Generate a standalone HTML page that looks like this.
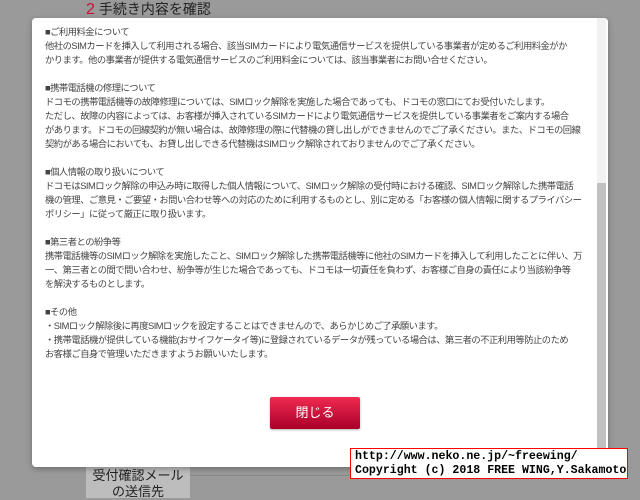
<!DOCTYPE html>
<html><head><meta charset="utf-8"><style>
body{margin:0;width:640px;height:486px;background:#9a9a9a;position:relative;overflow:hidden;font-family:"Liberation Sans","Noto Sans CJK JP",sans-serif;}
.hd{position:absolute;left:86px;top:-1px;font-size:14px;color:#222;line-height:20px}
.hd b{color:#c8103a;font-weight:normal;font-size:16px;margin-right:4px}
.line{position:absolute;left:86px;right:87px;top:18px;height:2px;background:#8a1a30}
.tab{position:absolute;left:86px;top:465px;width:104px;height:30px;background:#bdbdbd;font-size:13px;color:#222;text-align:center;line-height:16px;padding-top:3px;white-space:nowrap}
.rule{position:absolute;left:190px;right:32px;top:475px;height:1px;background:#888}
.modal{position:absolute;left:32px;top:18px;width:576px;height:449px;background:#fff;border-radius:4px;overflow:hidden;box-shadow:0 2px 6px rgba(0,0,0,.3)}
.txt{position:absolute;left:13px;top:7px;font-size:9.3px;letter-spacing:-0.5px;line-height:14px;color:#444;white-space:nowrap}
.txt p{margin:0 0 14px}
.sb{position:absolute;right:2px;top:0;width:9px;height:449px;background:#f1f1f1}
.th{position:absolute;right:2px;top:165px;width:9px;height:270px;background:#c1c1c1}
.btn{position:absolute;left:238px;top:379px;width:90px;height:32px;background:linear-gradient(#f02a50,#a8002a);color:#fff;font-size:13px;text-align:center;line-height:32px;border-radius:2px;box-shadow:0 1px 2px rgba(0,0,0,.3)}
.cp{position:absolute;left:350px;top:448px;border:1px solid #f00;background:#fff;font-family:"Liberation Mono",monospace;font-size:11.6px;line-height:14px;color:#000;padding:1px 0 0 4px;box-sizing:border-box;width:278px;height:31px;font-weight:bold;white-space:nowrap;overflow:hidden}
</style></head><body>
<div class="hd"><b>2</b>手続き内容を確認</div>
<div class="line"></div>
<div class="tab">受付確認メール<br>の送信先</div>
<div class="rule"></div>
<div class="modal">
<div class="txt">
<p>■ご利用料金について<br>他社のSIMカードを挿入して利用される場合、該当SIMカードにより電気通信サービスを提供している事業者が定めるご利用料金がか<br>かります。他の事業者が提供する電気通信サービスのご利用料金については、該当事業者にお問い合せください。</p>
<p>■携帯電話機の修理について<br>ドコモの携帯電話機等の故障修理については、SIMロック解除を実施した場合であっても、ドコモの窓口にてお受付いたします。<br>ただし、故障の内容によっては、お客様が挿入されているSIMカードにより電気通信サービスを提供している事業者をご案内する場合<br>があります。ドコモの回線契約が無い場合は、故障修理の際に代替機の貸し出しができませんのでご了承ください。また、ドコモの回線<br>契約がある場合においても、お貸し出しできる代替機はSIMロック解除されておりませんのでご了承ください。</p>
<p>■個人情報の取り扱いについて<br>ドコモはSIMロック解除の申込み時に取得した個人情報について、SIMロック解除の受付時における確認、SIMロック解除した携帯電話<br>機の管理、ご意見・ご要望・お問い合わせ等への対応のために利用するものとし、別に定める「お客様の個人情報に関するプライバシー<br>ポリシー」に従って厳正に取り扱います。</p>
<p>■第三者との紛争等<br>携帯電話機等のSIMロック解除を実施したこと、SIMロック解除した携帯電話機等に他社のSIMカードを挿入して利用したことに伴い、万<br>一、第三者との間で問い合わせ、紛争等が生じた場合であっても、ドコモは一切責任を負わず、お客様ご自身の責任により当該紛争等<br>を解決するものとします。</p>
<p>■その他<br>・SIMロック解除後に再度SIMロックを設定することはできませんので、あらかじめご了承願います。<br>・携帯電話機が提供している機能(おサイフケータイ等)に登録されているデータが残っている場合は、第三者の不正利用等防止のため<br>お客様ご自身で管理いただきますようお願いいたします。</p>
</div>
<div class="sb"></div><div class="th"></div>
<div class="btn">閉じる</div>
</div>
<div class="cp">http://www.neko.ne.jp/~freewing/<br>Copyright (c) 2018 FREE WING,Y.Sakamoto</div>
</body></html>
